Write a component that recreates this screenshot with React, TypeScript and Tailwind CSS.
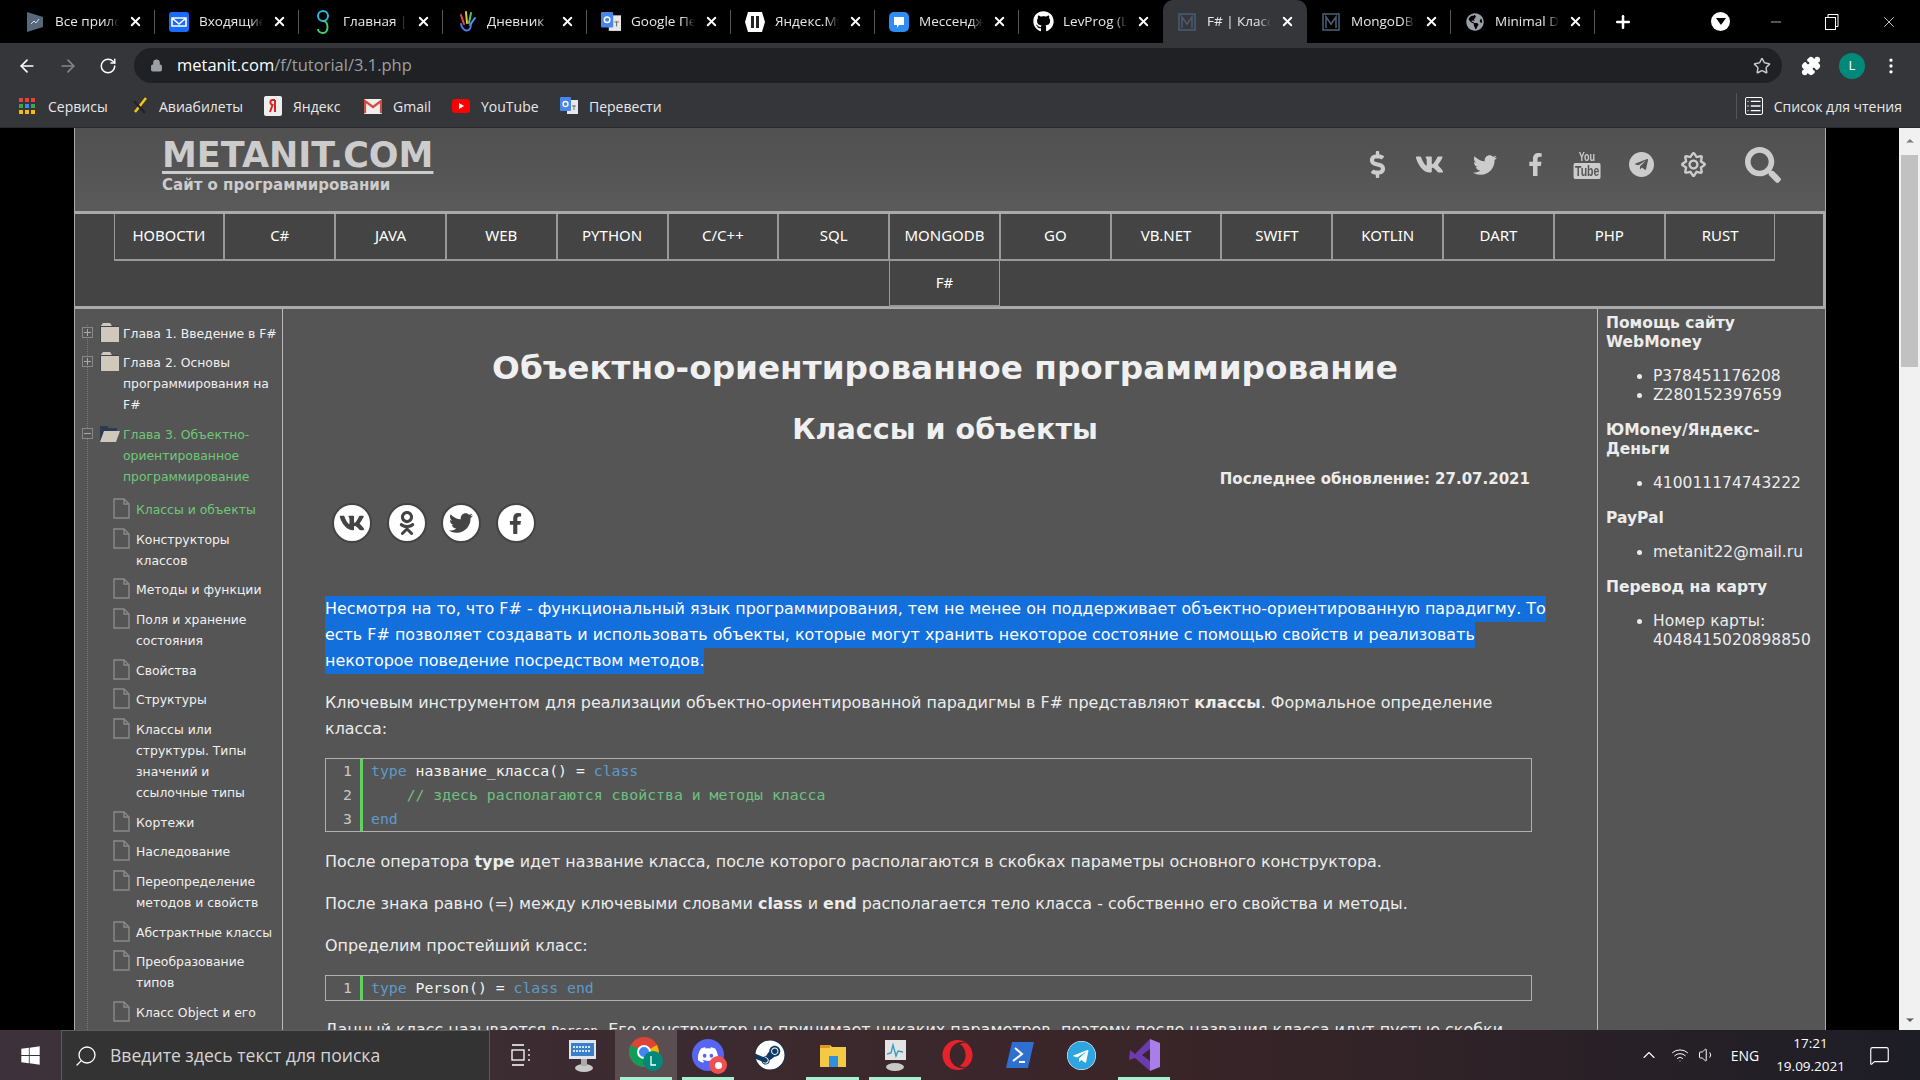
import React from 'react';
import { ArrowLeft, ArrowRight, RotateCw, Lock, Star, Puzzle, MoreVertical, Plus, X, Minus, ChevronUp, ChevronDown, Search, Volume1, Wifi, MessageSquare, List } from 'lucide-react';
import { FaDollarSign, FaVk, FaTwitter, FaFacebookF, FaTelegramPlane, FaRegSun, FaSearch, FaOdnoklassniki, FaGithub, FaWindows, FaDiscord, FaSteam, FaOpera, FaTelegram, FaGlobeAmericas } from 'react-icons/fa';

const MongoIcon = () => (
  <svg width="18" height="18" viewBox="0 0 18 18" fill="none" stroke="#4a5a6e" strokeWidth="1.6">
    <rect x="1" y="1" width="16" height="16" />
    <path d="M4 15V4l5 7 5-7v11" />
  </svg>
);

const TranslateIcon = ({ size = 18 }: { size?: number }) => (
  <svg width={size} height={size} viewBox="0 0 18 18">
    <rect x="7" y="3" width="11" height="14" fill="#e8e8e8" />
    <rect x="0" y="0" width="11" height="14" rx="1" fill="#4a86e8" />
    <circle cx="5.5" cy="7" r="2.5" fill="none" stroke="#fff" strokeWidth="1.3" />
    <path d="M12 9h4M14 8v5" stroke="#777" strokeWidth="1" />
  </svg>
);

const tabs: { title: string; icon: React.ReactNode; active?: boolean }[] = [
  { title: 'Все приложения', icon: <svg width="18" height="22" viewBox="0 0 18 22"><path d="M1 1l16 5v10L1 21z" fill="#56687a" /><path d="M5 13l3-3 2 2 3-4" stroke="#cde" fill="none" /></svg> },
  { title: 'Входящие', icon: <svg width="20" height="20" viewBox="0 0 20 20"><rect width="20" height="20" rx="3" fill="#1a6bff" /><path d="M3 6h14v8H3zM3 6l7 6 7-6" fill="none" stroke="#fff" strokeWidth="1.6" /></svg> },
  { title: 'Главная | Дневник', icon: <svg width="14" height="26" viewBox="0 0 14 26" fill="none" strokeWidth="2"><circle cx="7" cy="7" r="5" stroke="#2fb6e0" /><path d="M7 12c6 0 6 12 0 12-3 0-5-2-5-4" stroke="#3bd16f" /></svg> },
  { title: 'Дневник', icon: <svg width="20" height="24" viewBox="0 0 20 24" fill="none" strokeWidth="2" strokeLinecap="round"><path d="M4 5l3 9" stroke="#e24a4a" /><path d="M9 2l1 11" stroke="#e8c43a" /><path d="M14 3l-2 10" stroke="#4ac47a" /><path d="M18 8l-5 7" stroke="#4a9ae8" /><path d="M4 14c2 8 9 9 10 1" stroke="#4a7ae8" /></svg> },
  { title: 'Google Переводчик', icon: <TranslateIcon size={20} /> },
  { title: 'Яндекс.Музыка', icon: <svg width="20" height="22" viewBox="0 0 20 22"><path d="M3 1h14l3 10-3 10H3L0 11z" fill="#fff" /><rect x="6" y="5" width="3" height="12" fill="#222" /><rect x="11" y="5" width="3" height="12" fill="#222" /></svg> },
  { title: 'Мессенджер', icon: <svg width="20" height="20" viewBox="0 0 20 20"><rect width="20" height="20" rx="5" fill="#2f8cf0" /><path d="M5 5h10v8h-5l-2 3v-3H5z" fill="#fff" /></svg> },
  { title: 'LevProg (Lev)', icon: <FaGithub size={21} color="#fff" /> },
  { title: 'F# | Классы и объекты', icon: <MongoIcon />, active: true },
  { title: 'MongoDB', icon: <MongoIcon /> },
  { title: 'Minimal Dark', icon: <FaGlobeAmericas size={18} color="#9aa0a6" /> },
];

const bookmarks: { title: string; icon: React.ReactNode; cls: string }[] = [
  {
    title: 'Сервисы',
    cls: 'w-[113px]',
    icon: (
      <svg width="16" height="16" viewBox="0 0 16 16">
        {[0, 6, 12].map(x => [0, 6, 12].map(y => (
          <rect key={`${x}-${y}`} x={x} y={y} width="4" height="4" fill={y === 0 ? '#ea4335' : y === 6 ? (x === 6 ? '#4285f4' : '#34a853') : '#fbbc05'} />
        )))}
      </svg>
    ),
  },
  { title: 'Авиабилеты', cls: 'w-[132px]', icon: <svg width="16" height="18" viewBox="0 0 16 18"><path d="M14 1L3 15" stroke="#f5c518" strokeWidth="2.5" /><path d="M2 4l11 12" stroke="#222" strokeWidth="2" /></svg> },
  { title: 'Яндекс', cls: 'w-[100px]', icon: <svg width="18" height="20" viewBox="0 0 18 20"><rect width="18" height="20" rx="2" fill="#eee" /><path d="M11 4H8.5C6 4 5.5 8 8.5 9L6 16M11 4v12" stroke="#d22" strokeWidth="2" fill="none" /></svg> },
  { title: 'Gmail', cls: 'w-[88px]', icon: <svg width="18" height="15" viewBox="0 0 18 15"><rect width="18" height="15" rx="1" fill="#eee" /><path d="M1 14V2l8 6 8-6v12" fill="none" stroke="#d54b3d" strokeWidth="2.2" /></svg> },
  { title: 'YouTube', cls: 'w-[108px]', icon: <svg width="18" height="14" viewBox="0 0 18 14"><rect width="18" height="14" rx="3.5" fill="#f00" /><path d="M7 4l5 3-5 3z" fill="#fff" /></svg> },
  { title: 'Перевести', cls: '', icon: <TranslateIcon /> },
];

const navItems = ['НОВОСТИ', 'C#', 'JAVA', 'WEB', 'PYTHON', 'C/C++', 'SQL', 'MONGODB', 'GO', 'VB.NET', 'SWIFT', 'KOTLIN', 'DART', 'PHP', 'RUST', 'F#'];

const chapters = [
  { text: 'Глава 1. Введение в F#' },
  { text: 'Глава 2. Основы\nпрограммирования на\nF#' },
  { text: 'Глава 3. Объектно-\nориентированное\nпрограммирование', open: true },
];

const lessons = [
  'Классы и объекты',
  'Конструкторы\nклассов',
  'Методы и функции',
  'Поля и хранение\nсостояния',
  'Свойства',
  'Структуры',
  'Классы или\nструктуры. Типы\nзначений и\nссылочные типы',
  'Кортежи',
  'Наследование',
  'Переопределение\nметодов и свойств',
  'Абстрактные классы',
  'Преобразование\nтипов',
  'Класс Object и его',
];

const Folder = ({ open }: { open?: boolean }) => (
  <svg width="21" height="20" viewBox="0 0 21 20">
    {open ? (
      <>
        <path d="M1 2h7l2 2h8v4H5L1 18z" fill="#2d3b52" />
        <path d="M5 7h16l-4 11H1z" fill="#cfc8bb" />
      </>
    ) : (
      <>
        <path d="M4 0h7l2 3h7v1H1z" fill="#cfc8bb" />
        <path d="M1 3h19v1H1z" fill="#3a4354" />
        <rect x="1" y="4" width="19" height="15" fill="#cfc8bb" />
        <path d="M1 4h1v15H1z" fill="#3a4354" />
      </>
    )}
  </svg>
);

const FileIcon = () => (
  <svg width="17" height="21" viewBox="0 0 17 21" fill="none" stroke="#8a8a8a" strokeWidth="1.4">
    <path d="M1 1h10l5 5v14H1z" />
    <path d="M11 1v5h5" />
  </svg>
);

const Expander = ({ open }: { open?: boolean }) => (
  <span className="relative flex h-[11px] w-[11px] items-center justify-center border border-[#888] bg-[#555]">
    <span className="h-px w-[7px] bg-[#aaa]" />
    {!open && <span className="absolute h-[7px] w-px bg-[#aaa]" />}
  </span>
);

const Sidebar = () => (
  <div className="relative w-[208px] shrink-0 overflow-hidden border-r border-[#bbb] pt-[13.5px] text-[12.4px] leading-[21px] text-[#f0f0f0]">
    <div className="absolute bottom-0 left-[12px] top-[16px] border-l border-dotted border-[#7a7a7a]" />
    {chapters.map(c => (
      <div key={c.text} className={`relative ml-[7px] flex items-start ${c.open ? 'mb-[12px] text-[#6fc878]' : 'mb-[8.7px]'}`}>
        <div className="mt-[4px]"><Expander open={c.open} /></div>
        <div className="ml-[6px] mr-[3px]"><Folder open={c.open} /></div>
        <div className="whitespace-pre">{c.text}</div>
      </div>
    ))}
    {lessons.map((l, i) => (
      <div key={l} className={`relative mb-[8.7px] ml-[38px] flex items-start gap-[6px] ${i === 0 ? 'text-[#6fc878]' : ''}`}>
        <div className="-mt-[1px]"><FileIcon /></div>
        <div className="whitespace-pre">{l}</div>
      </div>
    ))}
  </div>
);

const CodeBlock = ({ lines }: { lines: React.ReactNode[] }) => (
  <div className="flex w-[1207px] border border-[#b0b0b0] font-['DejaVu_Sans_Mono',monospace] text-[14.8px] leading-[24px]">
    <div className="w-[34px] pr-[8px] text-right text-[#c8c8c8]">
      {lines.map((_, i) => <div key={i}>{i + 1}</div>)}
    </div>
    <div className="border-l-[3px] border-[#62d162] pl-[8px] text-[#f2f2f2]">
      {lines.map((l, i) => <div key={i} className="whitespace-pre">{l}</div>)}
    </div>
  </div>
);

const Kw = ({ children }: { children: React.ReactNode }) => <span className="text-[#5f9ac9]">{children}</span>;

const Content = () => (
  <div className="w-[1314px] shrink-0 overflow-hidden pl-[42px] pt-[39px] text-[15.94px] leading-[26px] text-[#ececec]">
    <h1 className="w-[1240px] whitespace-nowrap text-center text-[32.7px] font-bold leading-[40px] text-[#f0f0f0]">Объектно-ориентированное программирование</h1>
    <h2 className="mt-[23px] w-[1240px] text-center text-[28.6px] font-bold leading-[36px] text-[#f0f0f0]">Классы и объекты</h2>
    <div className="mt-[22px] w-[1205px] text-right text-[15px] font-bold leading-[20px]">Последнее обновление: 27.07.2021</div>
    <div className="ml-[7px] mt-[14px] flex gap-[14.5px]">
      {[<FaVk size={26} />, <FaOdnoklassniki size={24} />, <FaTwitter size={24} />, <FaFacebookF size={21} />].map((icon, i) => (
        <div key={i} className="flex h-[40px] w-[40px] items-center justify-center rounded-full border-2 border-[#444] bg-white text-[#444]">{icon}</div>
      ))}
    </div>
    <div className="mt-[53px] flex flex-col items-start whitespace-nowrap text-white">
      <span className="h-[26px] bg-[#136fdc]">Несмотря на то, что F# - функциональный язык программирования, тем не менее он поддерживает объектно-ориентированную парадигму. То </span>
      <span className="h-[26px] bg-[#136fdc]">есть F# позволяет создавать и использовать объекты, которые могут хранить некоторое состояние с помощью свойств и реализовать </span>
      <span className="h-[26px] bg-[#136fdc]">некоторое поведение посредством методов.</span>
    </div>
    <p className="mt-[16px] whitespace-nowrap">Ключевым инструментом для реализации объектно-ориентированной парадигмы в F# представляют <b>классы</b>. Формальное определение<br />класса:</p>
    <div className="mt-[16px]">
      <CodeBlock lines={[
        <><Kw>type</Kw> название_класса() = <Kw>class</Kw></>,
        <span className="text-[#6fc080]">{'    // здесь располагаются свойства и методы класса'}</span>,
        <Kw>end</Kw>,
      ]} />
    </div>
    <p className="mt-[17px] whitespace-nowrap">После оператора <b>type</b> идет название класса, после которого располагаются в скобках параметры основного конструктора.</p>
    <p className="mt-[16px] whitespace-nowrap">После знака равно (=) между ключевыми словами <b>class</b> и <b>end</b> располагается тело класса - собственно его свойства и методы.</p>
    <p className="mt-[15.5px] whitespace-nowrap">Определим простейший класс:</p>
    <div className="mt-[16.5px]">
      <CodeBlock lines={[<><Kw>type</Kw> Person() = <Kw>class</Kw> <Kw>end</Kw></>]} />
    </div>
    <p className="mt-[16px] whitespace-nowrap">Данный класс называется <span className="font-['DejaVu_Sans_Mono',monospace] text-[13px]">Person</span>. Его конструктор не принимает никаких параметров, поэтому после названия класса идут пустые скобки</p>
  </div>
);

const RightHeading = ({ children, className = '' }: { children: React.ReactNode; className?: string }) => (
  <div className={`whitespace-pre font-bold ${className}`}>{children}</div>
);

const Donate = () => (
  <div className="flex-1 overflow-hidden border-l border-[#bbb] pl-[8px] pt-[5px] text-[15.5px] leading-[19px] text-[#ececec]">
    <RightHeading>{'Помощь сайту\nWebMoney'}</RightHeading>
    <ul className="ml-[47px] mt-[15px] list-disc">
      <li>P378451176208</li>
      <li>Z280152397659</li>
    </ul>
    <RightHeading className="mt-[16px]">{'ЮMoney/Яндекс-\nДеньги'}</RightHeading>
    <ul className="ml-[47px] mt-[15px] list-disc"><li>410011174743222</li></ul>
    <RightHeading className="mt-[16px]">PayPal</RightHeading>
    <ul className="ml-[47px] mt-[15px] list-disc"><li>metanit22@mail.ru</li></ul>
    <RightHeading className="mt-[16px]">Перевод на карту</RightHeading>
    <ul className="ml-[47px] mt-[15px] list-disc"><li>Номер карты:<br />4048415020898850</li></ul>
  </div>
);

const TabBar = () => (
  <div className="flex h-[43px] shrink-0 items-center bg-black pl-[11px] font-['Open_Sans',sans-serif] text-[13.5px] text-[#e8e8e8]">
    {tabs.map((t, i) => (
      <div key={t.title} className={`relative flex h-[43px] w-[144px] shrink-0 items-center ${t.active ? 'rounded-t-[10px] bg-[#35363a]' : ''}`}>
        <div className="flex w-[44px] justify-center pl-[4px]">{t.icon}</div>
        <div className="w-[64px] overflow-hidden whitespace-nowrap [mask-image:linear-gradient(to_right,black_80%,transparent)]">{t.title}</div>
        <X size={15} strokeWidth={3} className="ml-[9px] text-white" />
        {!t.active && i !== 7 && <div className="absolute right-0 top-[10px] h-[24px] w-px bg-[#555]" />}
      </div>
    ))}
    <Plus size={20} strokeWidth={3} className="ml-[18px] text-white" />
    <div className="ml-[78px] flex h-[19px] w-[19px] items-center justify-center rounded-full bg-white">
      <div className="h-0 w-0 border-x-[5px] border-t-[7px] border-x-transparent border-t-black" />
    </div>
    <Minus size={16} strokeWidth={1} className="ml-[38px] text-white" />
    <svg width="14" height="16" viewBox="0 0 14 16" className="ml-[41px]" fill="none" stroke="#fff"><rect x="0.5" y="3.5" width="10" height="12" /><path d="M3 3V.5h10v12h-2" /></svg>
    <X size={18} strokeWidth={1} className="ml-[41px] text-white" />
  </div>
);

const Toolbar = () => (
  <div className="flex h-[42px] shrink-0 items-center bg-[#35363a] pt-[3px] font-['Open_Sans',sans-serif]">
    <ArrowLeft size={20} className="ml-[17px] text-white" />
    <ArrowRight size={20} className="ml-[21px] text-[#85868a]" />
    <RotateCw size={18} className="ml-[21px] text-white" />
    <div className="ml-[17px] flex h-[35px] w-[1648px] items-center rounded-full bg-[#202124] text-[16.5px]">
      <Lock size={13} className="ml-[16px] text-[#9aa0a6]" fill="#9aa0a6" />
      <span className="ml-[14px] text-white">metanit.com</span><span className="text-[#9aa0a6]">/f/tutorial/3.1.php</span>
      <Star size={18} className="ml-auto mr-[11px] text-[#c8c8c8]" />
    </div>
    <Puzzle size={20} className="ml-[19px] text-white" fill="#fff" />
    <div className="ml-[18px] flex h-[26px] w-[26px] items-center justify-center rounded-full bg-[#00897b] text-[13px] text-white">L</div>
    <MoreVertical size={20} className="ml-[16px] text-white" />
  </div>
);

const Bookmarks = () => (
  <div className="flex h-[43px] shrink-0 items-center border-b border-[#2a2a2a] bg-[#35363a] pl-[19px] font-['Open_Sans',sans-serif] text-[14px] text-[#e8e8e8]">
    {bookmarks.map((b, i) => (
      <div key={b.title} className={`flex items-center ${i === 0 ? 'gap-[13px]' : 'gap-[11px]'} ${b.cls}`}>
        {b.icon}
        <span>{b.title}</span>
      </div>
    ))}
    <div className="ml-auto flex h-[26px] items-center border-l border-[#555] pl-[8px] pr-[18px]">
      <List size={18} className="mr-[11px] rounded-[2px] border border-white text-white" />
      <span>Список для чтения</span>
    </div>
  </div>
);

const SiteHeader = () => (
  <div className="flex h-[83px] items-start bg-gradient-to-b from-[#505050] to-[#5a5a5a] pl-[87px]">
    <div className="pt-[6px] text-[#cccccc]">
      <div className="text-[35px] font-bold leading-[42px] underline decoration-[3px] underline-offset-[4px]">METANIT.COM</div>
      <div className="-mt-[1px] text-[15px] font-bold leading-[20px]">Сайт о программировании</div>
    </div>
    <div className="ml-auto flex h-full items-center pb-[10px] pr-[22px] text-[#cccccc]">
      <div className="flex w-[52px] justify-center"><FaDollarSign size={27} /></div>
      <div className="flex w-[52px] justify-center"><FaVk size={29} /></div>
      <div className="flex w-[60px] justify-center"><FaTwitter size={24} /></div>
      <div className="flex w-[40px] justify-center"><FaFacebookF size={23} /></div>
      <div className="flex w-[64px] flex-col items-center font-['Liberation_Sans',sans-serif] text-[12px] font-bold leading-[12px]">
        <span className="scale-x-75">You</span>
        <span className="scale-x-75 rounded-[2px] bg-[#ccc] px-[2px] text-[14px] leading-[16px] text-[#555]">Tube</span>
      </div>
      <div className="flex w-[44px] justify-center">
        <div className="flex h-[25px] w-[25px] items-center justify-center rounded-full bg-[#ccc] text-[#555]"><FaTelegramPlane size={15} /></div>
      </div>
      <div className="flex w-[60px] justify-center"><FaRegSun size={25} /></div>
      <div className="flex w-[80px] justify-center"><FaSearch size={36} /></div>
    </div>
  </div>
);

const Nav = () => (
  <div className="h-[98px] border-y-[3px] border-r-2 border-[#aaa] bg-[#444] pl-[38px] pr-[47px]">
    <div className="flex flex-wrap justify-center font-['Noto_Sans',sans-serif] text-[15px] text-white">
      {navItems.map(n => (
        <div key={n} className="flex h-[46.5px] w-[110.8px] items-center justify-center border-x border-b-2 border-[#999] pb-[2px]">{n}</div>
      ))}
    </div>
  </div>
);

const Taskbar = () => {
  const apps: { key: string; icon: React.ReactNode; on?: boolean; active?: boolean }[] = [
    { key: 'view', icon: <svg width="20" height="22" viewBox="0 0 20 22" fill="none" stroke="#fff" strokeWidth="1.3"><path d="M1 1h12M1 21h12" /><rect x="1" y="6" width="12" height="10" /><path d="M18 5v2M18 10v2M18 15v2" /></svg> },
    { key: 'monitor', icon: <svg width="30" height="34" viewBox="0 0 30 34"><rect x="1" y="2" width="27" height="19" fill="#dfe6ee" /><rect x="3" y="5" width="23" height="13" fill="#3a7fc8" /><path d="M5 9h18M5 13h18" stroke="#cfe4ff" strokeWidth="2" strokeDasharray="2 1" /><ellipse cx="16" cy="30" rx="9" ry="4" fill="#c8c8c8" /><rect x="13" y="21" width="6" height="7" fill="#aaa" /></svg> },
    { key: 'chrome', on: true, active: true, icon: <svg width="34" height="36" viewBox="0 0 34 36"><circle cx="15" cy="15" r="15" fill="#db4437" /><path d="M15 15L2 8A15 15 0 0 0 15 30z" fill="#0f9d58" /><path d="M15 15L28 8A15 15 0 0 1 25 26z" fill="#f4b400" /><circle cx="15" cy="15" r="6" fill="#4285f4" stroke="#fff" strokeWidth="2" /><circle cx="24" cy="24" r="10" fill="#00897b" /><path d="M22 19v9h5" stroke="#fff" fill="none" strokeWidth="1.3" /></svg> },
    { key: 'discord', on: true, icon: <div className="relative flex h-[32px] w-[32px] items-center justify-center rounded-full bg-[#5865f2]"><FaDiscord size={22} color="#fff" /><div className="absolute -bottom-[3px] -right-[3px] flex h-[18px] w-[18px] items-center justify-center rounded-full bg-[#f04f4f]"><div className="h-[7px] w-[7px] rounded-full bg-white" /></div></div> },
    { key: 'steam', icon: <FaSteam size={30} color="#fff" className="rounded-full bg-[#0f3a63]" /> },
    { key: 'files', on: true, icon: <svg width="28" height="26" viewBox="0 0 28 26"><path d="M1 3h10l2 2h14v20H1z" fill="#f6c945" /><rect x="10" y="14" width="9" height="11" fill="#2f8fe0" /><rect x="1" y="3" width="10" height="3" fill="#d99a1e" /></svg> },
    { key: 'monitor2', on: true, icon: <svg width="26" height="32" viewBox="0 0 26 32"><rect x="3" y="1" width="21" height="20" fill="#e4e4e4" /><path d="M5 15l4-1 2-8 3 11 2-5 5 1" stroke="#3a9ac8" fill="none" strokeWidth="1.4" /><ellipse cx="13" cy="28" rx="9" ry="4" fill="#c8c8c8" /></svg> },
    { key: 'opera', icon: <FaOpera size={31} color="#e8222a" /> },
    { key: 'shell', icon: <svg width="28" height="28" viewBox="0 0 28 28"><path d="M6 1h22l-6 26H0z" fill="#2f6fd0" /><path d="M9 7l7 6-9 7M13 21h6" stroke="#fff" fill="none" strokeWidth="2" /></svg> },
    { key: 'tg', icon: <FaTelegram size={29} color="#2ca5e0" className="rounded-full bg-white" /> },
    { key: 'vs', on: true, icon: <svg width="31" height="32" viewBox="0 0 31 32"><path d="M21 0l10 4v24l-10 4z" fill="#a97ee8" /><path d="M21 0L6 15 1 11 0 21l6-2 15 13V22l-8-6 8-6z" fill="#6a3cb0" /></svg> },
  ];
  return (
    <div className="flex h-[50px] shrink-0 bg-gradient-to-r from-[#3d323b] via-[#3a2528] via-60% to-[#1d1d26] font-['Open_Sans',sans-serif] text-white">
      <div className="flex w-[61px] items-center justify-center"><FaWindows size={21} /></div>
      <div className="flex w-[429px] items-center border border-b-0 border-[#5c5c5c] bg-[#333] pl-[12px] text-[#d5d5d5]">
        <Search size={24} strokeWidth={1.3} className="-scale-x-100 text-white" />
        <span className="ml-[12px] whitespace-nowrap text-[17.6px]">Введите здесь текст для поиска</span>
      </div>
      {apps.map(a => (
        <div key={a.key} className={`relative flex w-[62.3px] items-center justify-center ${a.active ? 'bg-[#5b4e50]' : ''}`}>
          {a.icon}
          {a.on && <div className="absolute inset-x-[5px] bottom-0 h-[3px] bg-[#a7f0cf]" />}
        </div>
      ))}
      <div className="ml-auto flex items-center pr-[30px] text-[14px]">
        <ChevronUp size={20} strokeWidth={1.3} />
        <Wifi size={18} strokeWidth={1.3} className="ml-[12px]" />
        <Volume1 size={18} strokeWidth={1.3} className="ml-[9px]" />
        <span className="ml-[15px]">ENG</span>
        <div className="ml-[17px] flex flex-col items-center text-[13.5px] leading-[23px]">
          <span>17:21</span>
          <span>19.09.2021</span>
        </div>
        <MessageSquare size={21} strokeWidth={1.3} className="ml-[24px]" />
      </div>
    </div>
  );
};

export default function App() {
  return (
    <div className="flex h-screen w-screen flex-col overflow-hidden bg-black font-['DejaVu_Sans',sans-serif]">
      <TabBar />
      <Toolbar />
      <Bookmarks />
      <div className="flex min-h-0 flex-1">
        <div className="flex w-[1899px] justify-center pl-[1px]">
          <div className="flex w-[1752px] flex-col border-x border-[#aaa] bg-[#555]">
            <SiteHeader />
            <Nav />
            <div className="flex min-h-0 flex-1">
              <Sidebar />
              <Content />
              <Donate />
            </div>
          </div>
        </div>
        <div className="relative flex w-[21px] flex-col bg-[#f1f1f1]">
          <ChevronUp size={12} fill="#777" className="mx-auto mt-[7px] text-[#777]" />
          <div className="mx-[2px] mt-[8px] h-[212px] bg-[#c1c1c1]" />
          <ChevronDown size={12} fill="#555" className="mx-auto mb-[4px] mt-auto text-[#555]" />
        </div>
      </div>
      <Taskbar />
    </div>
  );
}
